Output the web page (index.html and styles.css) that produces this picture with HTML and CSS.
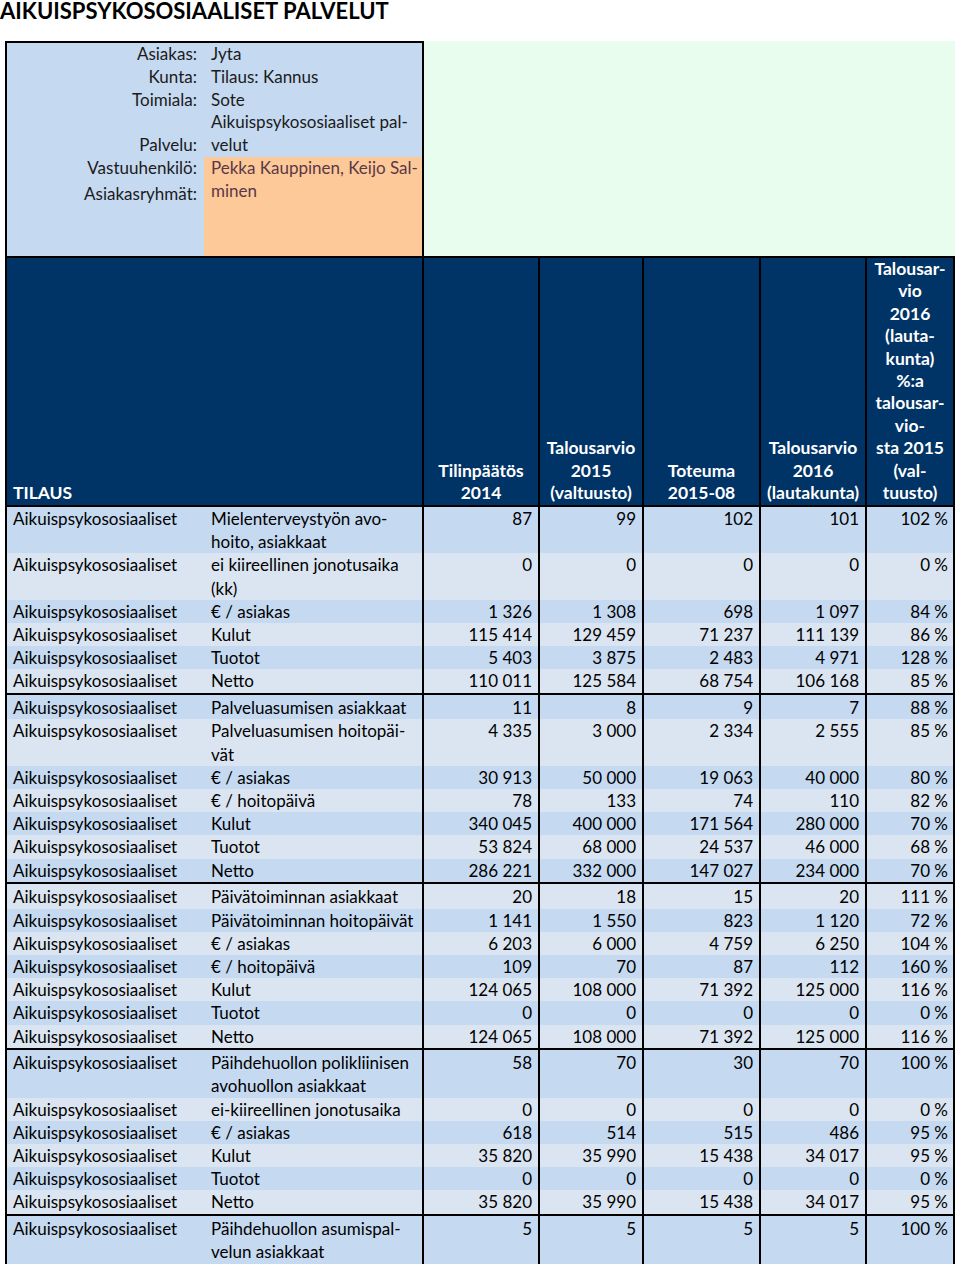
FILE: index.html
```html
<!DOCTYPE html>
<html lang="fi">
<head>
<meta charset="utf-8">
<title>Aikuispsykososiaaliset palvelut</title>
<link rel="stylesheet" href="styles.css">
</head>
<body>
<h1 class="title">AIKUISPSYKOSOSIAALISET PALVELUT</h1>

<div class="top">
  <div class="info">
    <div class="lbl">Asiakas:</div><div class="val">Jyta</div>
    <div class="lbl">Kunta:</div><div class="val">Tilaus: Kannus</div>
    <div class="lbl">Toimiala:</div><div class="val">Sote</div>
    <div class="lbl lbl-end">Palvelu:</div><div class="val">Aikuispsykososiaaliset pal-<br>velut</div>
    <div class="lbl lbl-stack"><span>Vastuuhenkilö:</span><span class="second">Asiakasryhmät:</span></div>
    <div class="val val-orange">Pekka Kauppinen, Keijo Sal-<br>minen</div>
  </div>
  <div class="green"></div>
</div>

<div class="sheet">
  <div class="row head">
    <div class="hc hc-first"><span>TILAUS</span></div>
    <div class="hc"><span>Tilinpäätös<br>2014</span></div>
    <div class="hc"><span>Talousarvio<br>2015<br>(valtuusto)</span></div>
    <div class="hc"><span>Toteuma<br>2015-08</span></div>
    <div class="hc"><span>Talousarvio<br>2016<br>(lautakunta)</span></div>
    <div class="hc hc-last"><span>Talousar-<br>vio<br>2016<br>(lauta-<br>kunta)<br>%:a<br>talousar-<br>vio-<br>sta 2015<br>(val-<br>tuusto)</span></div>
  </div>

  <div class="row dk"><div class="c a">Aikuispsykososiaaliset</div><div class="c b">Mielenterveystyön avo-<br>hoito, asiakkaat</div><div class="c n">87</div><div class="c n">99</div><div class="c n">102</div><div class="c n">101</div><div class="c n g">102 %</div></div>
  <div class="row lt"><div class="c a">Aikuispsykososiaaliset</div><div class="c b">ei kiireellinen jonotusaika<br>(kk)</div><div class="c n">0</div><div class="c n">0</div><div class="c n">0</div><div class="c n">0</div><div class="c n g">0 %</div></div>
  <div class="row dk"><div class="c a">Aikuispsykososiaaliset</div><div class="c b">€ / asiakas</div><div class="c n">1 326</div><div class="c n">1 308</div><div class="c n">698</div><div class="c n">1 097</div><div class="c n g">84 %</div></div>
  <div class="row lt"><div class="c a">Aikuispsykososiaaliset</div><div class="c b">Kulut</div><div class="c n">115 414</div><div class="c n">129 459</div><div class="c n">71 237</div><div class="c n">111 139</div><div class="c n g">86 %</div></div>
  <div class="row dk"><div class="c a">Aikuispsykososiaaliset</div><div class="c b">Tuotot</div><div class="c n">5 403</div><div class="c n">3 875</div><div class="c n">2 483</div><div class="c n">4 971</div><div class="c n g">128 %</div></div>
  <div class="row lt"><div class="c a">Aikuispsykososiaaliset</div><div class="c b">Netto</div><div class="c n">110 011</div><div class="c n">125 584</div><div class="c n">68 754</div><div class="c n">106 168</div><div class="c n g">85 %</div></div>

  <div class="row dk grp"><div class="c a">Aikuispsykososiaaliset</div><div class="c b">Palveluasumisen asiakkaat</div><div class="c n">11</div><div class="c n">8</div><div class="c n">9</div><div class="c n">7</div><div class="c n g">88 %</div></div>
  <div class="row lt"><div class="c a">Aikuispsykososiaaliset</div><div class="c b">Palveluasumisen hoitopäi-<br>vät</div><div class="c n">4 335</div><div class="c n">3 000</div><div class="c n">2 334</div><div class="c n">2 555</div><div class="c n g">85 %</div></div>
  <div class="row dk"><div class="c a">Aikuispsykososiaaliset</div><div class="c b">€ / asiakas</div><div class="c n">30 913</div><div class="c n">50 000</div><div class="c n">19 063</div><div class="c n">40 000</div><div class="c n g">80 %</div></div>
  <div class="row lt"><div class="c a">Aikuispsykososiaaliset</div><div class="c b">€ / hoitopäivä</div><div class="c n">78</div><div class="c n">133</div><div class="c n">74</div><div class="c n">110</div><div class="c n g">82 %</div></div>
  <div class="row dk"><div class="c a">Aikuispsykososiaaliset</div><div class="c b">Kulut</div><div class="c n">340 045</div><div class="c n">400 000</div><div class="c n">171 564</div><div class="c n">280 000</div><div class="c n g">70 %</div></div>
  <div class="row lt"><div class="c a">Aikuispsykososiaaliset</div><div class="c b">Tuotot</div><div class="c n">53 824</div><div class="c n">68 000</div><div class="c n">24 537</div><div class="c n">46 000</div><div class="c n g">68 %</div></div>
  <div class="row dk"><div class="c a">Aikuispsykososiaaliset</div><div class="c b">Netto</div><div class="c n">286 221</div><div class="c n">332 000</div><div class="c n">147 027</div><div class="c n">234 000</div><div class="c n g">70 %</div></div>

  <div class="row lt grp"><div class="c a">Aikuispsykososiaaliset</div><div class="c b">Päivätoiminnan asiakkaat</div><div class="c n">20</div><div class="c n">18</div><div class="c n">15</div><div class="c n">20</div><div class="c n g">111 %</div></div>
  <div class="row dk"><div class="c a">Aikuispsykososiaaliset</div><div class="c b">Päivätoiminnan hoitopäivät</div><div class="c n">1 141</div><div class="c n">1 550</div><div class="c n">823</div><div class="c n">1 120</div><div class="c n g">72 %</div></div>
  <div class="row lt"><div class="c a">Aikuispsykososiaaliset</div><div class="c b">€ / asiakas</div><div class="c n">6 203</div><div class="c n">6 000</div><div class="c n">4 759</div><div class="c n">6 250</div><div class="c n g">104 %</div></div>
  <div class="row dk"><div class="c a">Aikuispsykososiaaliset</div><div class="c b">€ / hoitopäivä</div><div class="c n">109</div><div class="c n">70</div><div class="c n">87</div><div class="c n">112</div><div class="c n g">160 %</div></div>
  <div class="row lt"><div class="c a">Aikuispsykososiaaliset</div><div class="c b">Kulut</div><div class="c n">124 065</div><div class="c n">108 000</div><div class="c n">71 392</div><div class="c n">125 000</div><div class="c n g">116 %</div></div>
  <div class="row dk"><div class="c a">Aikuispsykososiaaliset</div><div class="c b">Tuotot</div><div class="c n">0</div><div class="c n">0</div><div class="c n">0</div><div class="c n">0</div><div class="c n g">0 %</div></div>
  <div class="row lt"><div class="c a">Aikuispsykososiaaliset</div><div class="c b">Netto</div><div class="c n">124 065</div><div class="c n">108 000</div><div class="c n">71 392</div><div class="c n">125 000</div><div class="c n g">116 %</div></div>

  <div class="row dk grp"><div class="c a">Aikuispsykososiaaliset</div><div class="c b">Päihdehuollon polikliinisen<br>avohuollon asiakkaat</div><div class="c n">58</div><div class="c n">70</div><div class="c n">30</div><div class="c n">70</div><div class="c n g">100 %</div></div>
  <div class="row lt"><div class="c a">Aikuispsykososiaaliset</div><div class="c b">ei-kiireellinen jonotusaika</div><div class="c n">0</div><div class="c n">0</div><div class="c n">0</div><div class="c n">0</div><div class="c n g">0 %</div></div>
  <div class="row dk"><div class="c a">Aikuispsykososiaaliset</div><div class="c b">€ / asiakas</div><div class="c n">618</div><div class="c n">514</div><div class="c n">515</div><div class="c n">486</div><div class="c n g">95 %</div></div>
  <div class="row lt"><div class="c a">Aikuispsykososiaaliset</div><div class="c b">Kulut</div><div class="c n">35 820</div><div class="c n">35 990</div><div class="c n">15 438</div><div class="c n">34 017</div><div class="c n g">95 %</div></div>
  <div class="row dk"><div class="c a">Aikuispsykososiaaliset</div><div class="c b">Tuotot</div><div class="c n">0</div><div class="c n">0</div><div class="c n">0</div><div class="c n">0</div><div class="c n g">0 %</div></div>
  <div class="row lt"><div class="c a">Aikuispsykososiaaliset</div><div class="c b">Netto</div><div class="c n">35 820</div><div class="c n">35 990</div><div class="c n">15 438</div><div class="c n">34 017</div><div class="c n g">95 %</div></div>

  <div class="row dk grp"><div class="c a">Aikuispsykososiaaliset</div><div class="c b">Päihdehuollon asumispal-<br>velun asiakkaat</div><div class="c n">5</div><div class="c n">5</div><div class="c n">5</div><div class="c n">5</div><div class="c n g">100 %</div></div>
</div>
</body>
</html>
```

FILE: styles.css
```css
* { box-sizing: border-box; }

body {
  margin: 0;
  background: #ffffff;
  color: #000000;
  font-family: Lato, "Open Sans", sans-serif;
  font-size: 17px;
  overflow: hidden;
}

.title {
  margin: 0 0 19px 0;
  font-size: 22px;
  line-height: 22px;
  font-weight: 700;
  white-space: nowrap;
}

.top {
  display: flex;
  margin-left: 5px;
  width: 950px;
  height: 215px;
}

.info {
  width: 419px;
  border: 2px solid #000;
  border-bottom: none;
  background: #c5d9f1;
  display: grid;
  grid-template-columns: 197px 1fr;
  grid-template-rows: auto auto auto auto 1fr;
  line-height: 22.8px;
  color: #1b1b1b;
}

.lbl {
  text-align: right;
  padding-right: 7px;
  white-space: nowrap;
}

.lbl-end { align-self: end; }

.lbl-stack {
  display: flex;
  flex-direction: column;
  align-items: flex-end;
}

.lbl-stack .second { margin-top: 3px; }

.val {
  padding-left: 7px;
  white-space: nowrap;
}

.val-orange {
  background: #fdc998;
  color: #5a3848;
}

.green {
  flex: 1;
  background: #e8fdee;
}

.sheet {
  margin-left: 5px;
  width: 950px;
}

.row {
  display: grid;
  grid-template-columns: 199px 218px 116px 104px 117px 106px 90px;
  line-height: 23.2px;
}

.row.dk { background: #c5d9f1; }
.row.lt { background: #dbe5f1; }

.row.grp {
  border-top: 2px solid #000;
  padding-top: 1.5px;
}

.row.grp .c { margin-top: -1.5px; padding-top: 1.5px; }

.c { white-space: nowrap; }

.c.a {
  border-left: 2px solid #000;
  padding-left: 6px;
}

.c.b { padding-left: 7px; }

.c.n {
  border-left: 2px solid #000;
  text-align: right;
  padding-right: 6px;
}

.c.n.g {
  border-right: 2px solid #000;
  padding-right: 5px;
}

.head {
  background: #003366;
  color: #ffffff;
  font-weight: 700;
  font-size: 17.5px;
  line-height: 22.4px;
  border-top: 2px solid #000;
  border-bottom: 2px solid #000;
}

.hc {
  display: flex;
  flex-direction: column;
  justify-content: flex-end;
  align-items: center;
  text-align: center;
  border-left: 2px solid #000;
  padding-bottom: 0.6px;
  white-space: nowrap;
}

.hc-first {
  grid-column: span 2;
  align-items: flex-start;
  text-align: left;
  padding-left: 6px;
}

.hc-last {
  border-right: 2px solid #000;
}
```
